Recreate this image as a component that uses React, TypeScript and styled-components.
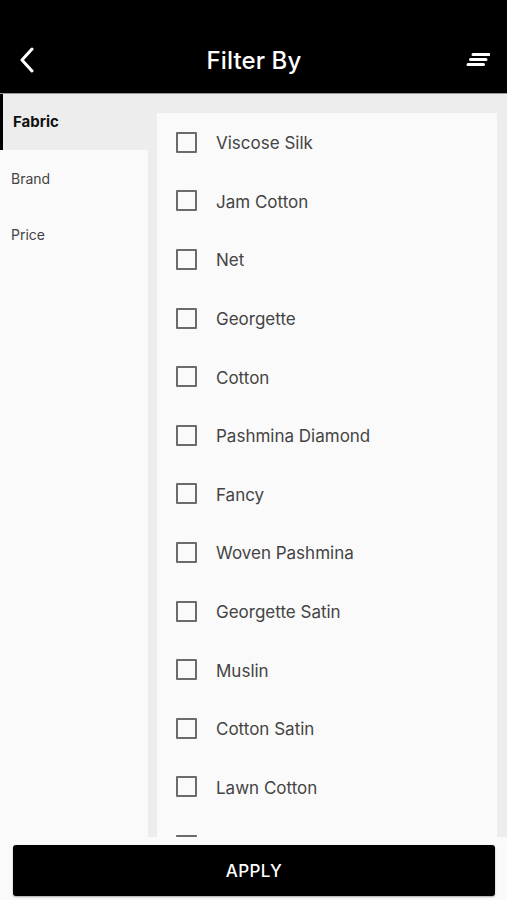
import styled, { createGlobalStyle } from 'styled-components'

const fabrics = [
    'Viscose Silk',
    'Jam Cotton',
    'Net',
    'Georgette',
    'Cotton',
    'Pashmina Diamond',
    'Fancy',
    'Woven Pashmina',
    'Georgette Satin',
    'Muslin',
    'Cotton Satin',
    'Lawn Cotton',
    'Khaddar',
]

const tabs = ['Fabric', 'Brand', 'Price']

const GlobalStyle = createGlobalStyle`
    html, body {
        margin: 0;
        padding: 0;
        background: #fafafa;
    }
    body {
        font-family: Inter, "Noto Sans", sans-serif;
        -webkit-font-smoothing: antialiased;
    }
    * {
        box-sizing: border-box;
    }
`

const BackIcon = () => (
    <svg width="18" height="26" viewBox="0 0 18 26">
        <path d="M14 2 L4 13 L14 24" fill="none" stroke="#fff" strokeWidth="3" strokeLinecap="round" strokeLinejoin="round" />
    </svg>
)

const SortIcon = () => (
    <svg width="24" height="14" viewBox="0 0 24 14">
        <path d="M7 1.5 H23 M4.5 6.5 H20 M2 11.5 H17.5" stroke="#fff" strokeWidth="3" strokeLinecap="round" />
    </svg>
)

const App = () => {
    return (
        <Page>
            <GlobalStyle />
            <Header>
                <IconButton side="left">
                    <BackIcon />
                </IconButton>
                <Title>Filter By</Title>
                <IconButton side="right">
                    <SortIcon />
                </IconButton>
            </Header>
            <Body>
                <Sidebar>
                    {tabs.map((tab, i) => (
                        <Tab key={tab} active={i === 0}>
                            {tab}
                        </Tab>
                    ))}
                    <SidebarFill />
                </Sidebar>
                <Main>
                    <Card>
                        {fabrics.map((name) => (
                            <Row key={name}>
                                <Checkbox />
                                <Label>{name}</Label>
                            </Row>
                        ))}
                    </Card>
                </Main>
            </Body>
            <Footer>
                <ApplyButton>APPLY</ApplyButton>
            </Footer>
        </Page>
    )
}

const Page = styled.div`
    display: flex;
    flex-direction: column;
    height: 900px;
    width: 507px;
    overflow: hidden;
`

const Header = styled.div`
    display: grid;
    grid-template-columns: 1fr auto 1fr;
    align-items: center;
    height: 94px;
    padding: 27px 17px 0 18px;
    background: #000;
    border-bottom: 1px solid #9a9a9a;
`

const IconButton = styled.div<{ side: 'left' | 'right' }>`
    display: flex;
    align-items: center;
    justify-content: ${({ side }) => (side === 'left' ? 'flex-start' : 'flex-end')};
    height: 30px;
`

const Title = styled.div`
    color: #fff;
    font-size: 24px;
    font-weight: 500;
    letter-spacing: 0.1px;
`

const Body = styled.div`
    display: flex;
    flex: 1;
    min-height: 0;
    background: #ededed;
`

const Sidebar = styled.div`
    display: flex;
    flex-direction: column;
    width: 148px;
`

const Tab = styled.div<{ active: boolean }>`
    display: flex;
    align-items: center;
    height: 56px;
    padding-left: ${({ active }) => (active ? '10px' : '11px')};
    padding-bottom: ${({ active }) => (active ? '2px' : '0')};
    border-left: ${({ active }) => (active ? '3px solid #000' : 'none')};
    background: ${({ active }) => (active ? '#ededed' : '#fafafa')};
    color: ${({ active }) => (active ? '#111' : '#444')};
    font-size: ${({ active }) => (active ? '15px' : '14px')};
    font-weight: ${({ active }) => (active ? 700 : 400)};
`

const SidebarFill = styled.div`
    flex: 1;
    background: #fafafa;
`

const Main = styled.div`
    display: flex;
    flex: 1;
    padding: 19px 10px 0 9px;
`

const Card = styled.div`
    flex: 1;
    overflow: hidden;
    background: #fafafa;
`

const Row = styled.div`
    display: flex;
    align-items: center;
    height: 58.6px;
    padding-left: 19px;
`

const Checkbox = styled.div`
    width: 21px;
    height: 21px;
    border: 2px solid #6b6b6b;
    border-radius: 1px;
    flex-shrink: 0;
`

const Label = styled.div`
    margin-left: 19px;
    padding-top: 2px;
    color: #444;
    font-size: 17px;
`

const Footer = styled.div`
    height: 63px;
    padding: 8px 12px 4px 13px;
    background: #fafafa;
`

const ApplyButton = styled.div`
    display: flex;
    align-items: center;
    justify-content: center;
    height: 51px;
    background: #000;
    border-radius: 3px;
    box-shadow: 0 1px 2px rgba(0, 0, 0, 0.35);
    color: #fff;
    font-size: 17px;
    font-weight: 500;
    letter-spacing: 0.4px;
`

export default App
